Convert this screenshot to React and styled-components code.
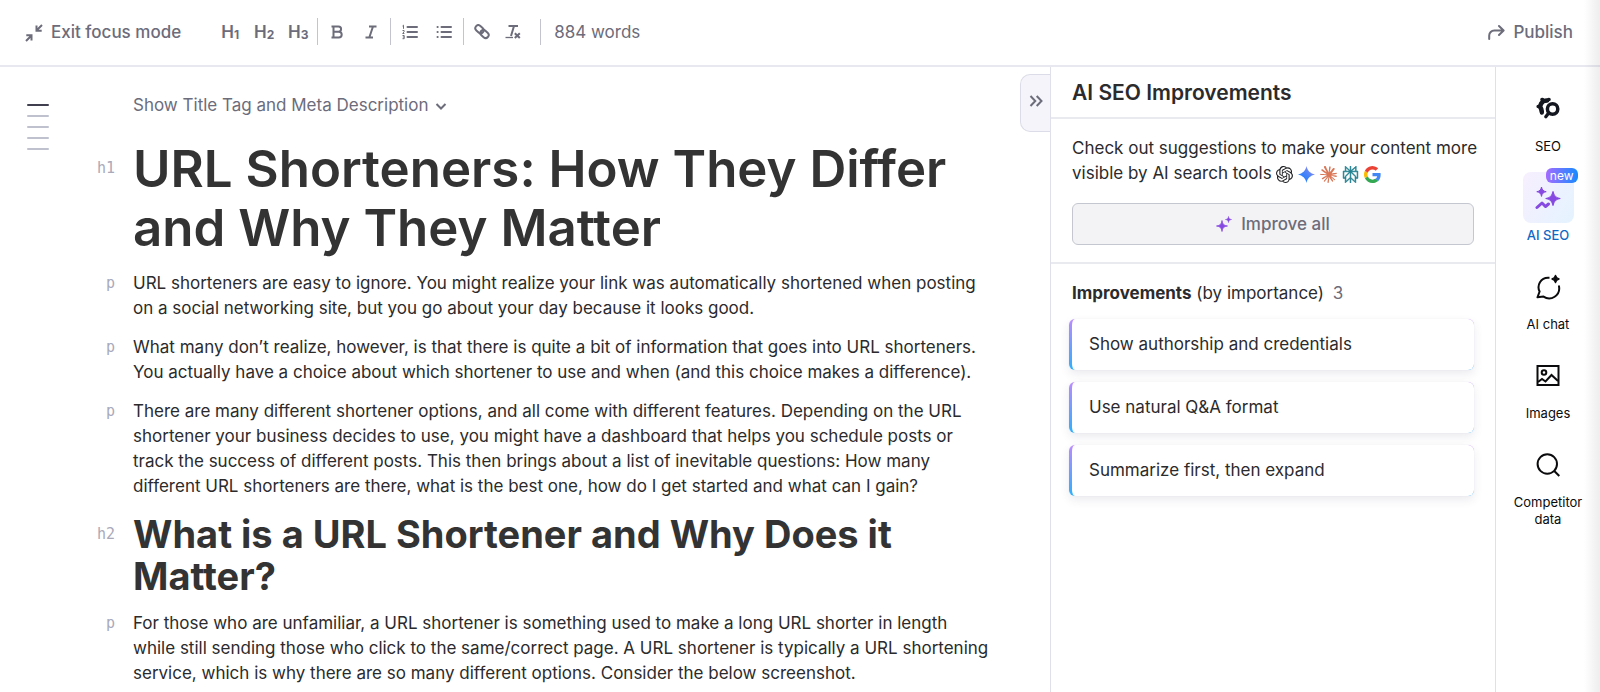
import styled, { createGlobalStyle, css } from 'styled-components'
import { SiOpenai, SiPerplexity, SiClaude } from 'react-icons/si'

const blocks = [
  { tag: 'h1', text: 'URL Shorteners: How They Differ and Why They Matter' },
  { tag: 'p', text: 'URL shorteners are easy to ignore. You might realize your link was automatically shortened when posting on a social networking site, but you go about your day because it looks good.' },
  { tag: 'p', text: 'What many don’t realize, however, is that there is quite a bit of information that goes into URL shorteners. You actually have a choice about which shortener to use and when (and this choice makes a difference).' },
  { tag: 'p', text: 'There are many different shortener options, and all come with different features. Depending on the URL shortener your business decides to use, you might have a dashboard that helps you schedule posts or track the success of different posts. This then brings about a list of inevitable questions: How many different URL shorteners are there, what is the best one, how do I get started and what can I gain?' },
  { tag: 'h2', text: 'What is a URL Shortener and Why Does it Matter?' },
  { tag: 'p', text: 'For those who are unfamiliar, a URL shortener is something used to make a long URL shorter in length while still sending those who click to the same/correct page. A URL shortener is typically a URL shortening service, which is why there are so many different options. Consider the below screenshot.' },
]

const improvements = [
  'Show authorship and credentials',
  'Use natural Q&A format',
  'Summarize first, then expand',
]

const railItems = [
  { label: 'SEO', icon: <SeoIcon /> },
  { label: 'AI SEO', icon: <AiSeoIcon />, active: true, badge: 'new' },
  { label: 'AI chat', icon: <ChatIcon /> },
  { label: 'Images', icon: <ImagesIcon /> },
  { label: 'Competitor data', icon: <SearchIcon /> },
]

const App = () => {
  return (
    <>
      <GlobalStyle />
      <StyledPage>
        <Toolbar />
        <StyledWorkspace>
          <Editor />
          <ImprovementsPanel />
          <Rail />
        </StyledWorkspace>
      </StyledPage>
    </>
  )
}

export default App

function Toolbar() {
  return (
    <StyledToolbar>
      <StyledTextButton>
        <ExitIcon />
        Exit focus mode
      </StyledTextButton>
      <StyledFormatting role="toolbar" aria-label="Formatting">
        {['1', '2', '3'].map(level => (
          <StyledFormatButton key={level} $text aria-label={`Heading ${level}`}>
            H<small>{level}</small>
          </StyledFormatButton>
        ))}
        <StyledDivider />
        <StyledFormatButton aria-label="Bold"><BoldIcon /></StyledFormatButton>
        <StyledFormatButton aria-label="Italic"><ItalicIcon /></StyledFormatButton>
        <StyledDivider />
        <StyledFormatButton aria-label="Numbered list"><NumberedIcon /></StyledFormatButton>
        <StyledFormatButton aria-label="Bulleted list"><BulletIcon /></StyledFormatButton>
        <StyledDivider />
        <StyledFormatButton $narrow aria-label="Link"><LinkIcon /></StyledFormatButton>
        <StyledFormatButton $narrow aria-label="Clear formatting"><ClearIcon /></StyledFormatButton>
      </StyledFormatting>
      <StyledWordCount>884 words</StyledWordCount>
      <StyledTextButton>
        <PublishIcon />
        Publish
      </StyledTextButton>
    </StyledToolbar>
  )
}

function Editor() {
  return (
    <StyledEditor>
      <StyledOutline aria-label="Outline">
        {[0, 1, 2, 3, 4].map(i => <StyledMark key={i} $active={i === 0} />)}
      </StyledOutline>
      <StyledDocument>
        <StyledMetaToggle>
          Show Title Tag and Meta Description
          <ChevronIcon />
        </StyledMetaToggle>
        {blocks.map(({ tag, text }) => (
          <StyledBlock key={text}>
            <StyledTag>{tag}</StyledTag>
            <StyledText as={tag} $tag={tag}>{text}</StyledText>
          </StyledBlock>
        ))}
      </StyledDocument>
      <StyledCollapse aria-label="Collapse panel"><DoubleChevronIcon /></StyledCollapse>
    </StyledEditor>
  )
}

function ImprovementsPanel() {
  return (
    <StyledPanel>
      <StyledPanelTitle>AI SEO Improvements</StyledPanelTitle>
      <StyledIntro>
        <StyledIntroText>
          Check out suggestions to make your content more visible by AI search tools{' '}
          <StyledLogos>
            <SiOpenai size={17} color="#1f2023" />
            <GeminiLogo />
            <SiClaude size={17} color="#d97757" />
            <SiPerplexity size={17} color="#20808d" stroke="#20808d" strokeWidth="0.8" />
            <GoogleLogo />
          </StyledLogos>
        </StyledIntroText>
        <StyledImproveButton>
          <SparklesIcon />
          Improve all
        </StyledImproveButton>
      </StyledIntro>
      <StyledListTitle>
        <b>Improvements</b> (by importance) <span>3</span>
      </StyledListTitle>
      <StyledCards>
        {improvements.map(item => (
          <li key={item}><StyledCard>{item}</StyledCard></li>
        ))}
      </StyledCards>
    </StyledPanel>
  )
}

function Rail() {
  return (
    <StyledRail>
      {railItems.map(({ label, icon, active, badge }) => (
        <StyledRailItem key={label} $active={active}>
          <StyledTile $active={active}>
            {icon}
            {badge && <StyledBadge>{badge}</StyledBadge>}
          </StyledTile>
          {label}
        </StyledRailItem>
      ))}
    </StyledRail>
  )
}

/* icons */

function ExitIcon() {
  return (
    <svg width="18" height="18" viewBox="0 0 18 18" fill="none" stroke="currentColor" strokeWidth="2">
      <path d="M17 1l-5.500 5.500M11.500 1.500v5.200h5.200M1 17l5.500-5.500M1.300 11.300h5.200v5.200" />
    </svg>
  )
}

function PublishIcon() {
  return (
    <svg width="17" height="18" viewBox="0 0 17 18" fill="none" stroke="currentColor" strokeWidth="2" strokeLinecap="round" strokeLinejoin="round">
      <path d="M1.200 15v-3.500a5 5 0 0 1 5-5h9M11 2l4.600 4.500L11 11" />
    </svg>
  )
}

function BoldIcon() {
  return (
    <svg width="14" height="16" viewBox="0 0 14 16" fill="none" stroke="currentColor" strokeWidth="2" strokeLinejoin="round">
      <path d="M1.500 2.500h7a2.600 2.600 0 0 1 0 5.200H3.500M3.500 2.500v11M1.500 13.500h7.300a2.900 2.900 0 0 0 0-5.800" />
    </svg>
  )
}

function ItalicIcon() {
  return (
    <svg width="14" height="16" viewBox="0 0 14 16" fill="none" stroke="currentColor" strokeWidth="2">
      <path d="M5 2.500h7.500M1.500 13.500H9M9 2.500l-3.700 11" />
    </svg>
  )
}

function NumberedIcon() {
  return (
    <svg width="16" height="16" viewBox="0 0 16 16" fill="none" stroke="currentColor" strokeWidth="2">
      <path d="M5.500 3H15M5.500 8H15M5.500 13H15" strokeLinecap="round" />
      <path d="M.500 2l1-.8v3.600M.500 6.500h1.600v1.200L.700 9.500h1.700M.500 11.500h1.700v3.200H.500M.800 13h1.400" strokeWidth="1" />
    </svg>
  )
}

function BulletIcon() {
  return (
    <svg width="16" height="16" viewBox="0 0 16 16" fill="none" stroke="currentColor" strokeWidth="2" strokeLinecap="round">
      <path d="M5.500 3H15M5.500 8H15M5.500 13H15M1.500 3h.2M1.500 8h.2M1.500 13h.2" />
    </svg>
  )
}

function LinkIcon() {
  return (
    <svg width="16" height="16" viewBox="0 0 16 16" fill="none" stroke="currentColor" strokeWidth="2">
      <rect x="1" y="2.200" width="9" height="6" rx="3" transform="rotate(42 5.500 5.200)" />
      <rect x="6" y="7" width="9" height="6" rx="3" transform="rotate(42 10.500 10)" />
    </svg>
  )
}

function ClearIcon() {
  return (
    <svg width="16" height="16" viewBox="0 0 16 16" fill="none" stroke="currentColor" strokeWidth="2">
      <path d="M3.500 2H13M9 2L6 12" />
      <path d="M.500 13.500H8" strokeWidth="1.300" />
      <path d="M9.800 9.200l5 4.800M14.800 9.200l-5 4.800" />
    </svg>
  )
}

function ChevronIcon() {
  return (
    <svg width="12" height="12" viewBox="0 0 12 12" fill="none" stroke="currentColor" strokeWidth="2">
      <path d="M1.500 4L6 8.500 10.500 4" />
    </svg>
  )
}

function DoubleChevronIcon() {
  return (
    <svg width="14" height="14" viewBox="0 0 14 14" fill="none" stroke="currentColor" strokeWidth="2">
      <path d="M1.500 2l4.800 5-4.800 5M7.700 2l4.800 5-4.800 5" />
    </svg>
  )
}

function SparklesIcon() {
  return (
    <svg width="16" height="16" viewBox="0 0 16 16" fill="#8649e1">
      <path d="M6 4.500c.500 3.700 1.800 5 5.500 5.500-3.700.500-5 1.800-5.500 5.500C5.500 11.800 4.200 10.500.500 10 4.200 9.500 5.500 8.200 6 4.500z" stroke="#8649e1" strokeWidth=".800" strokeLinejoin="round" />
      <path d="M12.500.500c.300 2 1 2.700 3 3-2 .300-2.700 1-3 3-.300-2-1-2.700-3-3 2-.300 2.700-1 3-3z" stroke="#8649e1" strokeWidth=".600" strokeLinejoin="round" />
    </svg>
  )
}

function GeminiLogo() {
  return (
    <svg width="17" height="17" viewBox="0 0 24 24">
      <defs>
        <linearGradient id="gemini" x1="0" y1="1" x2="1" y2="0">
          <stop offset="0.200" stopColor="#1c7dff" />
          <stop offset="0.600" stopColor="#5a86f5" />
          <stop offset="1" stopColor="#c58ae8" />
        </linearGradient>
      </defs>
      <path fill="url(#gemini)" d="M12 0c1.300 6.500 5.500 10.700 12 12-6.500 1.300-10.700 5.500-12 12-1.300-6.500-5.500-10.700-12-12C6.500 10.700 10.700 6.500 12 0z" />
    </svg>
  )
}

function GoogleLogo() {
  return (
    <svg width="17" height="17" viewBox="0 0 24 24">
      <path fill="#4285f4" d="M23.500 12.300c0-.900-.100-1.500-.200-2.300H12v4.500h6.600c-.300 1.700-1.300 3.100-2.700 4l3.900 3c2.300-2.200 3.700-5.300 3.700-9.200z" />
      <path fill="#34a853" d="M12 24c3.200 0 5.900-1.100 7.900-2.900l-3.900-3a7.200 7.200 0 0 1-10.700-3.800l-4 3.100A12 12 0 0 0 12 24z" />
      <path fill="#fbbc05" d="M5.300 14.300a7.400 7.400 0 0 1 0-4.600l-4-3.100a12 12 0 0 0 0 10.800z" />
      <path fill="#ea4335" d="M12 4.800c1.800 0 3.300.600 4.600 1.800L20 3.200A12 12 0 0 0 1.300 6.600l4 3.100A7.200 7.200 0 0 1 12 4.800z" />
    </svg>
  )
}

function SeoIcon() {
  return (
    <svg width="24" height="24" viewBox="0 0 24 24" fill="none" stroke="#14171f" strokeLinecap="round" strokeLinejoin="round">
      <path d="M11 3.500L7.500 4 5.200 6.500 4 9.500 5.200 12 5.800 14.800" strokeWidth="4.600" />
      <path d="M6 2.500h.500M12.700 2.500h.300M2.200 9.500h.300M5.700 16h.300" strokeWidth="3.600" />
      <circle cx="16.600" cy="12" r="5.200" strokeWidth="3.500" />
      <path d="M12.700 16L9.800 19.700" strokeWidth="3.300" />
    </svg>
  )
}

function AiSeoIcon() {
  return (
    <svg width="26" height="26" viewBox="0 0 26 26" fill="#8649e1" stroke="#8649e1" strokeLinejoin="round">
      <path d="M18 6.500c.900 4.500 2.500 6.100 7 7-4.500.900-6.100 2.500-7 7-.900-4.500-2.500-6.100-7-7 4.500-.900 6.100-2.500 7-7z" strokeWidth="1.200" />
      <path d="M6.500 2c.600 3 1.700 4.100 4.700 4.700-3 .600-4.100 1.700-4.700 4.700-.600-3-1.700-4.100-4.700-4.700 3-.600 4.100-1.700 4.700-4.700z" strokeWidth="1" />
      <path d="M2 22.500l5-4.500 3.500 3.500L13.500 19" fill="none" strokeWidth="3" strokeLinecap="round" />
    </svg>
  )
}

function ChatIcon() {
  return (
    <svg width="26" height="26" viewBox="0 0 26 26" fill="none" stroke="#0b0b0d" strokeWidth="2" strokeLinejoin="round">
      <path d="M14.500 3.700H13A9.500 9.500 0 0 0 4.600 17.500L2.500 23.300l6-.700A10 10 0 0 0 24 12.500V11.500" />
      <path d="M20.500 1.500c.600 2.400 1.100 2.900 3.500 3.500-2.400.600-2.900 1.100-3.500 3.500-.600-2.400-1.100-2.900-3.500-3.500 2.400-.600 2.900-1.100 3.500-3.500z" fill="#0b0b0d" strokeWidth="1.400" />
    </svg>
  )
}

function ImagesIcon() {
  return (
    <svg width="26" height="26" viewBox="0 0 26 26" fill="none" stroke="#0b0b0d" strokeWidth="2">
      <rect x="2.500" y="3" width="21" height="19" />
      <circle cx="9" cy="9.500" r="2.300" />
      <path d="M3 19l4-3 3.500 2.500 6-6.500 6.500 6" />
    </svg>
  )
}

function SearchIcon() {
  return (
    <svg width="26" height="26" viewBox="0 0 26 26" fill="none" stroke="#0b0b0d" strokeWidth="2">
      <circle cx="12.300" cy="12" r="9.700" />
      <path d="M19 18.700l5.300 5.300" />
    </svg>
  )
}

/* styles */

const GlobalStyle = createGlobalStyle`
  * {
    box-sizing: border-box;
  }
  body {
    margin: 0;
    background: #fff;
    color: #2b2b2d;
    font-family: Inter, "Liberation Sans", sans-serif;
    font-size: 17px;
    line-height: 25px;
  }
  h1, h2, p, ul {
    margin: 0;
    padding: 0;
  }
  button {
    border: 0;
    padding: 0;
    background: none;
    color: inherit;
    font: inherit;
    cursor: pointer;
  }
  svg {
    display: block;
    flex-shrink: 0;
  }
`
const StyledPage = styled.div`
  display: flex;
  flex-direction: column;
  height: 100vh;
  overflow: hidden;
  position: relative;
  /* soft shade along the window's right edge */
  &::after {
    content: '';
    position: absolute;
    top: 0;
    right: 0;
    bottom: 0;
    width: 16px;
    background: linear-gradient(to right, rgba(0, 0, 0, 0), rgba(0, 0, 0, 0.07));
    pointer-events: none;
  }
`
const StyledToolbar = styled.header`
  display: flex;
  align-items: center;
  flex-shrink: 0;
  padding: 18px 27px 20px 25px;
  border-bottom: 2px solid #e8e8f0;
  color: #6c6c7b;
`
const StyledTextButton = styled.button`
  display: flex;
  align-items: center;
  gap: 8px;
  padding-top: 2px;
  font-weight: 500;
`
const StyledFormatting = styled.div`
  display: flex;
  align-items: center;
  margin-left: 32px;
`
const StyledFormatButton = styled.button`
  display: flex;
  align-items: center;
  justify-content: center;
  width: ${props => props.$narrow ? '31px' : '34px'};
  height: 27px;
  padding-top: ${props => props.$text ? '2px' : '0'};
  font-weight: 600;
  small {
    font-size: 12px;
    font-weight: 700;
    line-height: 12px;
    padding-top: 4px;
  }
`
const StyledDivider = styled.span`
  width: 1px;
  height: 27px;
  margin: 0 2px;
  background: #c4c4cf;
`
const StyledWordCount = styled.span`
  margin: 0 auto 0 12px;
  padding: 1px 0 0 13px;
  border-left: 1px solid #c4c4cf;
`
const StyledWorkspace = styled.div`
  display: flex;
  flex: 1;
  min-height: 0;
`
const StyledEditor = styled.main`
  display: flex;
  align-items: flex-start;
  flex: 1;
  min-width: 0;
`
const StyledOutline = styled.nav`
  display: flex;
  flex-direction: column;
  gap: 9px;
  width: 77px;
  padding: 37px 28px 0 27px;
`
const StyledMark = styled.i`
  height: 2px;
  border-radius: 1px;
  background: ${props => props.$active ? '#3f3f50' : '#bfc2ce'};
`
const StyledDocument = styled.article`
  flex: 1;
  min-width: 0;
  padding: 26px 26px 0 0;
`
const StyledMetaToggle = styled.button`
  display: flex;
  align-items: center;
  gap: 7px;
  margin: 0 0 21px 56px;
  color: #6c6c7b;
`
const StyledBlock = styled.div`
  display: grid;
  grid-template-columns: 38px 1fr;
  column-gap: 18px;
  align-items: start;
  margin-bottom: 14px;
`
const StyledTag = styled.span`
  text-align: right;
  font-family: "DejaVu Sans Mono", monospace;
  font-size: 15px;
  color: #a9a9ba;
  ${StyledBlock}:has(h1) > & {
    line-height: 59px;
  }
  ${StyledBlock}:has(h2) > & {
    line-height: 42px;
  }
`
const StyledText = styled.p`
  ${props => props.$tag === 'h1' && css`
    font-size: 51px;
    line-height: 59px;
    font-weight: 600;
    color: #333;
  `}
  ${props => props.$tag === 'h2' && css`
    font-size: 38px;
    line-height: 42px;
    font-weight: 700;
    color: #333;
  `}
`
const StyledCollapse = styled.button`
  display: flex;
  align-items: center;
  justify-content: center;
  width: 30px;
  height: 58px;
  margin-top: 7px;
  padding-bottom: 4px;
  border: 1px solid #dcdce8;
  border-right: 0;
  border-radius: 10px 0 0 10px;
  background: #f4f4fa;
  color: #6c6c7b;
`
const StyledPanel = styled.aside`
  width: 445px;
  flex-shrink: 0;
  border-left: 1px solid #e0e0ea;
`
const StyledPanelTitle = styled.h2`
  padding: 13px 21px 12px;
  border-bottom: 2px solid #e9e9f0;
  font-size: 21px;
  font-weight: 600;
`
const StyledIntro = styled.section`
  padding: 17px 21px;
  border-bottom: 2px solid #e9e9f0;
`
const StyledIntroText = styled.p`
  margin-right: -12px;
`
const StyledLogos = styled.span`
  display: inline-flex;
  gap: 5px;
  vertical-align: -4px;
`
const StyledImproveButton = styled.button`
  display: flex;
  align-items: center;
  justify-content: center;
  gap: 9px;
  width: 100%;
  height: 42px;
  margin-top: 17px;
  border: 1px solid #c4c7cf;
  border-radius: 6px;
  background: #f3f3f6;
  color: #6c6c7b;
  font-weight: 500;
`
const StyledListTitle = styled.p`
  padding: 17px 21px 13px;
  span {
    margin-left: 4px;
    color: #6c6c7b;
  }
`
const StyledCards = styled.ul`
  display: flex;
  flex-direction: column;
  gap: 12px;
  padding: 0 21px 0 18px;
  list-style: none;
`
const StyledCard = styled.button`
  display: block;
  width: 100%;
  padding: 13px 17px;
  border-left: 3px solid transparent;
  border-radius: 6px;
  background: linear-gradient(#fff, #fff) padding-box, linear-gradient(#bb8bff, #2bb0ff) border-box;
  box-shadow: 0 4px 10px rgba(60, 60, 110, 0.1), 0 0 1px rgba(60, 60, 110, 0.15);
  text-align: left;
`
const StyledRail = styled.nav`
  display: flex;
  flex-direction: column;
  align-items: center;
  gap: 17px;
  width: 105px;
  flex-shrink: 0;
  padding: 16px 10px 0;
  border-left: 1px solid #e0e0ea;
`
const StyledRailItem = styled.button`
  display: flex;
  flex-direction: column;
  align-items: center;
  gap: 4px;
  font-size: 13px;
  font-weight: ${props => props.$active ? 500 : 400};
  line-height: 17px;
  color: ${props => props.$active ? '#0f68c4' : '#0b0b0d'};
`
const StyledTile = styled.span`
  position: relative;
  display: flex;
  align-items: center;
  justify-content: center;
  width: 51px;
  height: 51px;
  border-radius: 8px;
  background: ${props => props.$active ? 'linear-gradient(120deg, #f7effe, #e4f3ff)' : 'none'};
`
const StyledBadge = styled.span`
  position: absolute;
  top: -4px;
  right: -4px;
  padding: 0 4px;
  border-radius: 6px;
  background: linear-gradient(to right, #a46bff, #158bff);
  color: #fff;
  font-size: 12px;
  font-weight: 400;
  line-height: 15px;
`
